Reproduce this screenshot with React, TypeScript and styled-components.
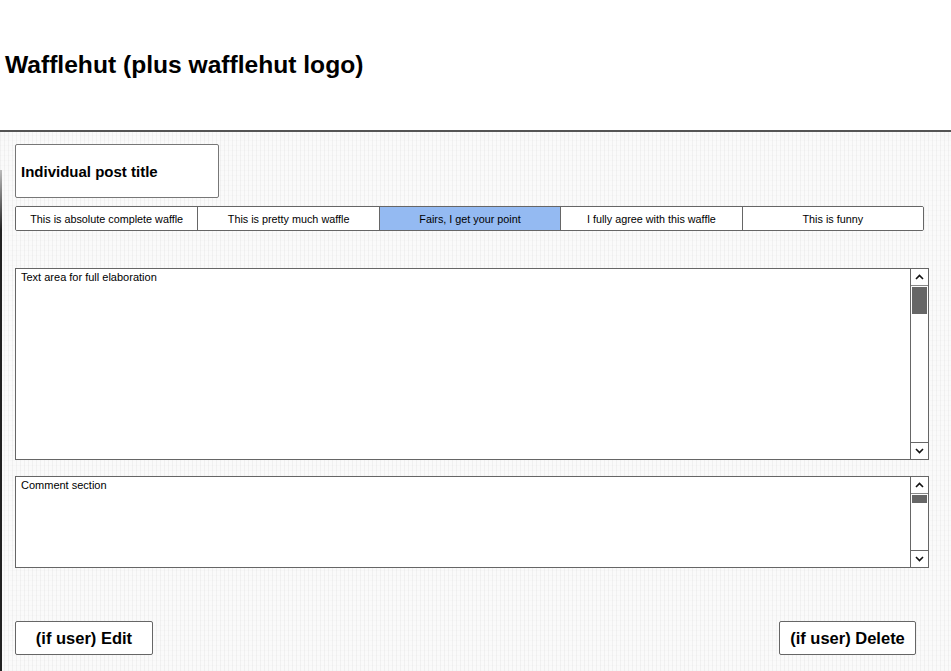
import React from "react";
import styled, { createGlobalStyle } from "styled-components";

const Global = createGlobalStyle`
  html, body { margin: 0; padding: 0; background: #fff; }
  body { font-family: "Liberation Sans", Arial, sans-serif; color: #000; }
  * { box-sizing: border-box; }
`;

const Page = styled.div`
  width: 951px;
  height: 671px;
  display: flex;
  flex-direction: column;
  overflow: hidden;
`;

const Header = styled.header`
  height: 132px;
  flex: none;
  display: flex;
  align-items: center;
  padding: 0 0 0 5px;
  border-bottom: 2px solid #555;
  background: #fff;
`;

const Brand = styled.h1`
  margin: 0 0 1px 0;
  font-size: 24.6px;
  font-weight: 700;
`;

const Main = styled.main`
  position: relative;
  flex: 1;
  display: flex;
  flex-direction: column;
  padding: 12px 22px 0 15px;
  background-color: #fafafa;
  background-image:
    repeating-linear-gradient(90deg, rgba(0,0,0,0.035) 0 1px, transparent 1px 4px),
    repeating-linear-gradient(0deg, rgba(0,0,0,0.012) 0 1px, transparent 1px 5px);
  &::before {
    content: "";
    position: absolute;
    left: 0;
    top: 38px;
    bottom: 0;
    width: 2px;
    background: linear-gradient(#bbb, #222 60px);
  }
`;

const TitleCard = styled.div`
  width: 204px;
  height: 54px;
  display: flex;
  align-items: center;
  padding: 0 0 0 5px;
  background: #fff;
  border: 1px solid #777;
  border-radius: 2px;
  font-size: 15px;
  font-weight: 700;
`;

const Tabs = styled.div`
  margin-top: 8px;
  width: 909px;
  height: 25px;
  display: grid;
  grid-template-columns: repeat(5, 1fr);
  background: #fff;
  border: 1px solid #666;
  border-radius: 2px;
  overflow: hidden;
`;

const Tab = styled.div<{ $active?: boolean }>`
  display: flex;
  align-items: center;
  justify-content: center;
  font-size: 10.8px;
  background: ${(p) => (p.$active ? "#94baf2" : "#fff")};
  & + & { border-left: 1px solid #666; }
`;

const Panel = styled.div<{ $h: number; $mt: number }>`
  margin-top: ${(p) => p.$mt}px;
  height: ${(p) => p.$h}px;
  width: 914px;
  display: flex;
  background: #fff;
  border: 1px solid #666;
`;

const PanelText = styled.div`
  flex: 1;
  padding: 2px 5px;
  font-size: 11px;
  line-height: 13px;
`;

const ScrollTrack = styled.div`
  width: 18px;
  flex: none;
  display: flex;
  flex-direction: column;
  border-left: 1px solid #666;
  background: #fff;
`;

const ScrollBtn = styled.div<{ $top?: boolean }>`
  height: 17px;
  flex: none;
  display: flex;
  align-items: center;
  justify-content: center;
  ${(p) => (p.$top ? "border-bottom: 1px solid #888;" : "border-top: 1px solid #666;")}
`;

const ThumbArea = styled.div`
  flex: 1;
  padding: 1px 1px;
`;

const Thumb = styled.div<{ $h: number }>`
  height: ${(p) => p.$h}px;
  background: #666;
`;

const ButtonRow = styled.div`
  margin-top: 53px;
  display: flex;
  justify-content: space-between;
  padding-right: 13px;
`;

const ActionButton = styled.button<{ $w: number }>`
  width: ${(p) => p.$w}px;
  height: 34px;
  background: #fff;
  border: 1px solid #666;
  border-radius: 2px;
  font-family: "Liberation Sans", Arial, sans-serif;
  font-size: 16.5px;
  font-weight: 700;
  color: #000;
  padding: 0;
`;

const Chevron = ({ up }: { up?: boolean }) => (
  <svg width="9" height="6" viewBox="0 0 9 6">
    <path
      d={up ? "M1 5 L4.5 1.5 L8 5" : "M1 1 L4.5 4.5 L8 1"}
      fill="none"
      stroke="#111"
      strokeWidth="1.6"
    />
  </svg>
);

const Scrollbar = ({ thumb }: { thumb: number }) => (
  <ScrollTrack>
    <ScrollBtn $top>
      <Chevron up />
    </ScrollBtn>
    <ThumbArea>
      <Thumb $h={thumb} />
    </ThumbArea>
    <ScrollBtn>
      <Chevron />
    </ScrollBtn>
  </ScrollTrack>
);

const tabs = [
  "This is absolute complete waffle",
  "This is pretty much waffle",
  "Fairs, I get your point",
  "I fully agree with this waffle",
  "This is funny",
];

export default function App() {
  return (
    <Page>
      <Global />
      <Header>
        <Brand>Wafflehut (plus wafflehut logo)</Brand>
      </Header>
      <Main>
        <TitleCard>Individual post title</TitleCard>
        <Tabs>
          {tabs.map((t, i) => (
            <Tab key={t} $active={i === 2}>
              {t}
            </Tab>
          ))}
        </Tabs>
        <Panel $h={192} $mt={37}>
          <PanelText>Text area for full elaboration</PanelText>
          <Scrollbar thumb={27} />
        </Panel>
        <Panel $h={92} $mt={16}>
          <PanelText>Comment section</PanelText>
          <Scrollbar thumb={8} />
        </Panel>
        <ButtonRow>
          <ActionButton $w={138}>(if user) Edit</ActionButton>
          <ActionButton $w={137}>(if user) Delete</ActionButton>
        </ButtonRow>
      </Main>
    </Page>
  );
}
